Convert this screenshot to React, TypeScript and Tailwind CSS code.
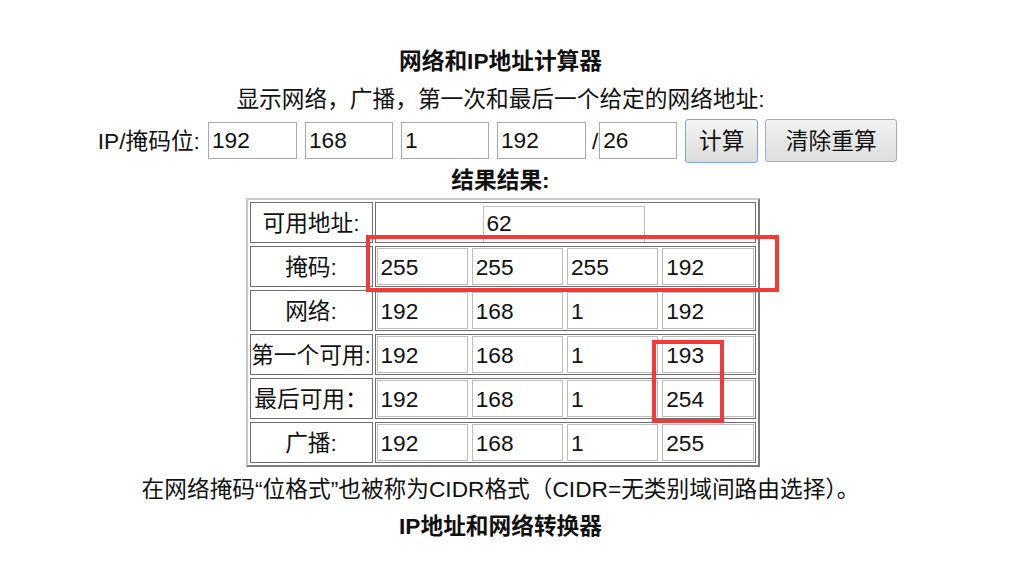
import React from "react"

const rows = [
  { label: "掩码:", values: ["255", "255", "255", "192"] },
  { label: "网络:", values: ["192", "168", "1", "192"] },
  { label: "第一个可用:", values: ["192", "168", "1", "193"] },
  { label: "最后可用：", values: ["192", "168", "1", "254"] },
  { label: "广播:", values: ["192", "168", "1", "255"] },
]

function Field({ value, className }: { value: string; className?: string }) {
  return (
    <input
      readOnly
      defaultValue={value}
      className={
        "h-[37px] border-[1.5px] border-[#a9a9a9] bg-white pl-[3px] text-[22.7px] leading-[28px] text-[#111] outline-none " +
        (className ?? "")
      }
    />
  )
}

export default function App() {
  return (
    <div className="relative min-h-[570px] w-full overflow-hidden bg-white font-['Liberation_Sans','Noto_Sans_CJK_SC',sans-serif] text-[22.7px] leading-[28px] text-[#111]">
      <div className="flex w-[1001px] flex-col items-center pt-[47px]">
        <h1 className="font-bold">网络和IP地址计算器</h1>
        <p className="mt-[10px]">显示网络，广播，第一次和最后一个给定的网络地址:</p>

        {/* IP / mask input row */}
        <div className="mr-[6px] mt-[5px] flex h-[45px] items-center">
          <span>IP/掩码位:</span>
          <Field value="192" className="ml-[8px] w-[89px]" />
          <Field value="168" className="ml-[8px] w-[88px]" />
          <Field value="1" className="ml-[8px] w-[88px]" />
          <Field value="192" className="ml-[8px] w-[89px]" />
          <span className="ml-[6px]">/</span>
          <Field value="26" className="ml-[1px] w-[78px]" />
          <button className="ml-[8px] h-[44px] w-[73px] rounded-[3px] border border-[#7ba7dc] bg-gradient-to-b from-[#f4f4f4] to-[#dcdcdc] text-[22.7px]">
            计算
          </button>
          <button className="ml-[7px] h-[43px] w-[132px] rounded-[3px] border border-[#acacac] bg-gradient-to-b from-[#f2f2f2] to-[#dedede] text-[22.7px]">
            清除重算
          </button>
        </div>

        <h2 className="mt-[3px] font-bold">结果结果:</h2>

        {/* Results table */}
        <div className="ml-[4px] mt-[4px] flex w-[514px] flex-col gap-[3px] border-2 border-b-[#7a7a7a] border-l-[#c8c8c8] border-r-[#7a7a7a] border-t-[#c8c8c8] p-[2px]">
          <div className="flex h-[41px] gap-[2px]">
            <div className="flex w-[123px] items-center justify-center border-[1.5px] border-[#6e6e6e]">可用地址:</div>
            <div className="flex flex-1 border-[1.5px] border-[#6e6e6e] pt-[3px]">
              <div className="ml-[107px] w-[162px] border-l-[1.5px] border-r-[1.5px] border-t-[1.5px] border-[#c0c0c0] pl-[3px] pt-[2px]">
                62
              </div>
            </div>
          </div>
          {rows.map((r) => (
            <div key={r.label} className="flex h-[41px] gap-[2px]">
              <div className="flex w-[123px] items-center justify-center whitespace-nowrap border-[1.5px] border-[#6e6e6e]">
                {r.label}
              </div>
              <div className="flex flex-1 gap-[4px] border-[1.5px] border-[#6e6e6e] p-[1px]">
                {r.values.map((v, i) => (
                  <div key={i} className="flex flex-1 items-center border-[1.5px] border-[#bcbcbc] pl-[3px]">
                    {v}
                  </div>
                ))}
              </div>
            </div>
          ))}
        </div>

        <p className="mt-[8px]">在网络掩码“位格式”也被称为CIDR格式（CIDR=无类别域间路由选择）。</p>
        <h2 className="mt-[9px] font-bold">IP地址和网络转换器</h2>
      </div>

      {/* red annotation frames */}
      <div className="absolute left-[366px] top-[235px] h-[57px] w-[413px] border-4 border-[#f23a3a]" />
      <div className="absolute left-[652px] top-[340px] h-[83px] w-[72px] border-4 border-[#f23a3a]" />
    </div>
  )
}
